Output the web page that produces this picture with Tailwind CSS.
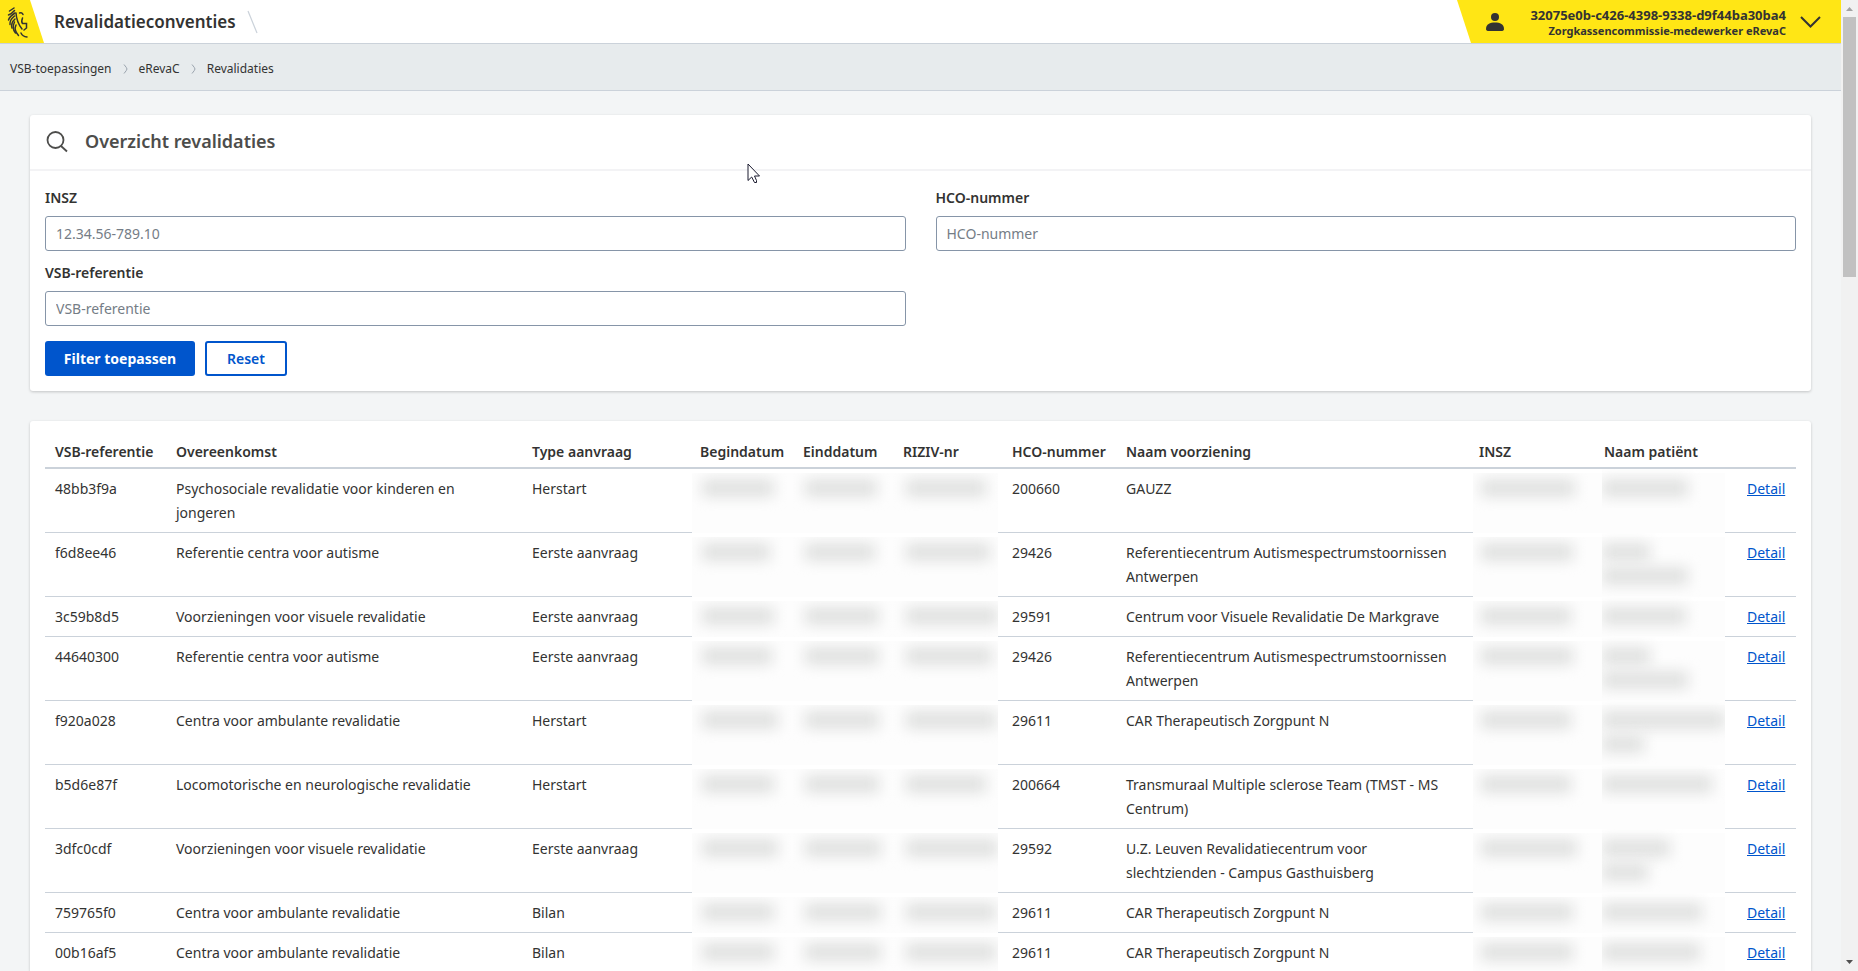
<!DOCTYPE html>
<html lang="nl">
<head>
  <meta charset="UTF-8" />
  <meta name="viewport" content="width=device-width, initial-scale=1.0"/>
  <title>Revalidatieconventies | Overzicht revalidaties</title>
  <script src="https://cdn.jsdelivr.net/npm/@tailwindcss/browser@4"></script>
</head>
<body class="flex h-screen overflow-hidden bg-[#f3f5f6] text-[#333332] text-sm font-['Noto_Sans','Open_Sans',sans-serif]">

<div class="flex-1 min-w-0 overflow-hidden">

  <!-- TOP BAR -->
  <header class="flex h-11 items-stretch justify-between bg-white border-b border-[#cbd2da]">
    <div class="flex items-center">
      <a href="#" aria-label="Vlaanderen" class="block h-full">
        <svg class="h-full w-11" viewBox="0 0 44 43">
          <path d="M0 0H30L44 43H0Z" fill="#ffe615"/>
          <g fill="none" stroke="#333332" stroke-width="1.500" stroke-linecap="round">
            <path d="M9.500 11L14 8"/>
            <path d="M8.500 15Q12 13.500 14.500 10.500"/>
            <path d="M8.500 20Q9.500 16.500 15 13"/>
            <path d="M10 24.500Q9.500 20 14.500 16"/>
            <path d="M12 28Q10.500 23 15 19"/>
            <path d="M15.500 33Q11.500 28 14.500 22"/>
            <path d="M18.500 35.500Q13.500 30 16 25"/>
            <path d="M16 13Q16.500 22 22 29"/>
            <path d="M19.500 13Q22 12 23 14.500"/>
            <path d="M22.500 18Q21 22 22.500 23.500H26.500V28L24 30"/>
            <path d="M21 33Q22.500 36.500 27 37"/>
          </g>
        </svg>
      </a>
      <h1 class="ml-[10px] pt-[2px] text-[17px] font-semibold">Revalidatieconventies</h1>
      <svg class="ml-[11px] h-6 w-3" viewBox="0 0 12 24"><path d="M1 1L10 23" stroke="#cbd2da" stroke-width="1.200"/></svg>
    </div>
    <div class="flex">
      <svg class="h-full w-[15px]" viewBox="0 0 15 43" preserveAspectRatio="none"><path d="M0 0H15V43H14Z" fill="#ffe615"/></svg>
      <button type="button" class="flex items-center bg-[#ffe615] pl-[13px] pr-5 text-right">
        <svg class="mr-[17px] h-5 w-5" viewBox="0 0 20 20" fill="#333332">
          <circle cx="10" cy="5" r="4"/>
          <path d="M1 17C1 12 5 10.500 10 10.500S19 12 19 17Q19 19 16 19H4Q1 19 1 17Z"/>
        </svg>
        <span class="block min-w-[264px] pt-[2px]">
          <span class="block text-[13px] leading-[15px] font-bold">32075e0b-c426-4398-9338-d9f44ba30ba4</span>
          <span class="block text-[11px] leading-[15px] font-bold">Zorgkassencommissie-medewerker eRevaC</span>
        </span>
        <svg class="ml-[14px] h-3 w-[21px]" viewBox="0 0 21 12" fill="none" stroke="#333332" stroke-width="2"><path d="M1 1L10.500 10.500L20 1"/></svg>
      </button>
    </div>
  </header>

  <!-- BREADCRUMB -->
  <nav aria-label="Kruimelpad" class="flex h-[47px] items-center gap-[11px] border-b border-[#cbd2da] bg-[#e7ebed] px-[10px] pt-[3px] text-xs">
    <a href="#">VSB-toepassingen</a>
    <svg class="h-[10px] w-[5px]" viewBox="0 0 5 10" fill="none" stroke="#9aa3ad"><path d="M1 0.500Q4 4 4 5T1 9.500"/></svg>
    <a href="#">eRevaC</a>
    <svg class="h-[10px] w-[5px]" viewBox="0 0 5 10" fill="none" stroke="#9aa3ad"><path d="M1 0.500Q4 4 4 5T1 9.500"/></svg>
    <a href="#">Revalidaties</a>
  </nav>

  <main class="px-[30px] pt-6">

    <!-- FILTER -->
    <section class="rounded-[3px] bg-white shadow-[0_1px_3px_rgba(0,0,0,0.2)]">
      <div class="flex h-14 items-center gap-[17px] border-b-2 border-[#f3f3f5] px-4 pb-px">
        <svg class="h-[22px] w-[22px]" viewBox="0 0 22 22" fill="none" stroke="#4d4d4b" stroke-width="1.800"><circle cx="9.500" cy="9" r="8"/><path d="M15 15L21 20.500"/></svg>
        <h2 class="text-[18px] font-semibold text-[#4d4d4b]">Overzicht revalidaties</h2>
      </div>
      <form class="px-[15px] pt-[15px] pb-[15px]">
        <div class="grid grid-cols-2 gap-x-[30px] gap-y-[10px]">
          <div>
            <label for="insz" class="block leading-6 font-semibold">INSZ</label>
            <input id="insz" type="text" placeholder="12.34.56-789.10" class="mt-[6px] block h-[35px] w-full rounded-[3px] border border-[#8695a8] px-[10px] placeholder:text-[#757d86]" />
          </div>
          <div>
            <label for="hco" class="block leading-6 font-semibold">HCO-nummer</label>
            <input id="hco" type="text" placeholder="HCO-nummer" class="mt-[6px] block h-[35px] w-full rounded-[3px] border border-[#8695a8] px-[10px] placeholder:text-[#757d86]" />
          </div>
          <div>
            <label for="vsb" class="block leading-6 font-semibold">VSB-referentie</label>
            <input id="vsb" type="text" placeholder="VSB-referentie" class="mt-[6px] block h-[35px] w-full rounded-[3px] border border-[#8695a8] px-[10px] placeholder:text-[#757d86]" />
          </div>
        </div>
        <div class="mt-[15px] flex gap-[10px]">
          <button type="submit" class="h-[35px] w-[150px] rounded-[3px] bg-[#0055cc] font-bold text-white">Filter toepassen</button>
          <button type="reset" class="h-[35px] w-[82px] rounded-[3px] border-2 border-[#0055cc] font-semibold text-[#0055cc]">Reset</button>
        </div>
      </form>
    </section>

    <!-- RESULTS -->
    <section class="mt-[30px] rounded-[3px] bg-white px-[15px] pt-[15px] shadow-[0_1px_3px_rgba(0,0,0,0.2)]">
      <table class="w-full table-fixed border-separate border-spacing-0 text-left leading-6">
        <colgroup>
          <col class="w-[121px]"><col class="w-[356px]"><col class="w-[168px]"><col class="w-[103px]"><col class="w-[100px]"><col class="w-[109px]">
          <col class="w-[114px]"><col class="w-[353px]"><col class="w-[125px]"><col class="w-[143px]"><col class="w-[59px]">
        </colgroup>
        <thead>
          <tr class="whitespace-nowrap *:h-[33px] *:border-b-2 *:border-[#cbd2da] *:px-[10px] *:pt-1 *:pb-[3px] *:font-semibold">
            <th>VSB-referentie</th>
            <th>Overeenkomst</th>
            <th>Type aanvraag</th>
            <th>Begindatum</th>
            <th>Einddatum</th>
            <th>RIZIV-nr</th>
            <th>HCO-nummer</th>
            <th>Naam voorziening</th>
            <th>INSZ</th>
            <th>Naam patiënt</th>
            <td></td>
          </tr>
        </thead>
        <tbody id="rows"></tbody>
      </table>
    </section>
  </main>
</div>

<!-- SCROLLBAR -->
<div class="flex w-[17px] shrink-0 flex-col items-center bg-[#f1f1f1]">
  <svg class="h-[17px] w-[17px]" viewBox="0 0 17 17"><path d="M5 11H12L8.500 7Z" fill="#a3a3a3"/></svg>
  <div class="h-[260px] w-[13px] bg-[#c1c1c1]"></div>
  <svg class="mt-auto h-[17px] w-[17px]" viewBox="0 0 17 17"><path d="M5 6H12L8.500 10Z" fill="#505050"/></svg>
</div>

<!-- MOUSE POINTER -->
<svg class="pointer-events-none absolute top-[163px] left-[747px] h-[21px] w-[14px]" viewBox="0 0 14 21"><path d="M1 1V17.500L4.700 14L7.500 19.500H9.500V17.500L7.500 13H12.500Z" fill="#fff" stroke="#1a1a2e"/></svg>

<script>
  // private cells hold the widths of their masked lines
  const rows = [
    ['48bb3f9a', 'Psychosociale revalidatie voor kinderen en jongeren', 'Herstart', '200660', 'GAUZZ', [72, 72, 80, 94], [86]],
    ['f6d8ee46', 'Referentie centra voor autisme', 'Eerste aanvraag', '29426', 'Referentiecentrum Autismespectrumstoornissen Antwerpen', [68, 70, 84, 92], [48, 86]],
    ['3c59b8d5', 'Voorzieningen voor visuele revalidatie', 'Eerste aanvraag', '29591', 'Centrum voor Visuele Revalidatie De Markgrave', [72, 74, 92, 90], [84]],
    ['44640300', 'Referentie centra voor autisme', 'Eerste aanvraag', '29426', 'Referentiecentrum Autismespectrumstoornissen Antwerpen', [70, 74, 86, 92], [48, 86]],
    ['f920a028', 'Centra voor ambulante revalidatie', 'Herstart', '29611', 'CAR Therapeutisch Zorgpunt N', [76, 74, 90, 90], [124, 42]],
    ['b5d6e87f', 'Locomotorische en neurologische revalidatie', 'Herstart', '200664', 'Transmuraal Multiple sclerose Team (TMST - MS Centrum)', [72, 74, 80, 90], [110]],
    ['3dfc0cdf', 'Voorzieningen voor visuele revalidatie', 'Eerste aanvraag', '29592', 'U.Z. Leuven Revalidatiecentrum voor slechtzienden - Campus Gasthuisberg', [76, 76, 92, 96], [68, 46]],
    ['759765f0', 'Centra voor ambulante revalidatie', 'Bilan', '29611', 'CAR Therapeutisch Zorgpunt N', [72, 76, 90, 92], [100]],
    ['00b16af5', 'Centra voor ambulante revalidatie', 'Bilan', '29611', 'CAR Therapeutisch Zorgpunt N', [72, 76, 90, 92], [98]],
  ];

  const cell = (text) => `<td class="border-b border-[#cbd2da] px-[10px] pt-2 pb-[7px]">${text}</td>`;

  const lines = (widths) => widths.map((w) =>
    `<div class="flex h-6 items-center"><div class="h-[18px] bg-[#e0e1e0] blur-[7px]" style="width:${w}px"></div></div>`).join('');

  document.getElementById('rows').innerHTML = rows.map(([ref, deal, type, hco, name, masks, patient]) => `
    <tr class="align-top">
      ${cell(ref)}${cell(deal)}${cell(type)}
      <td class="relative border-b border-[#cbd2da]"><div class="absolute top-1 right-0 -bottom-px left-[2px] overflow-hidden bg-[#fdfdfd] pt-[3px] pl-[10px]">${lines([masks[0]])}</div></td>
      <td class="relative border-b border-[#cbd2da]"><div class="absolute top-1 right-0 -bottom-px left-0 overflow-hidden bg-[#fdfdfd] pt-[3px] pl-[12px]">${lines([masks[1]])}</div></td>
      <td class="relative border-b border-[#cbd2da]"><div class="absolute top-1 right-[4px] -bottom-px left-0 overflow-hidden bg-[#fdfdfd] pt-[3px] pl-[13px]">${lines([masks[2]])}</div></td>
      ${cell(hco)}${cell(name)}
      <td class="relative border-b border-[#cbd2da]"><div class="absolute top-1 right-0 -bottom-px left-[4px] overflow-hidden bg-[#fdfdfd] pt-[3px] pl-[8px]">${lines([masks[3]])}</div></td>
      <td class="relative border-b border-[#cbd2da]">
        <div class="absolute top-1 right-[12px] -bottom-px left-0 bg-[#fdfdfd]"></div>
        <div class="relative mr-3 ml-2 overflow-hidden pt-[7px] pb-2">${lines(patient)}</div>
      </td>
      <td class="border-b border-[#cbd2da] px-[10px] pt-2 pb-[7px]"><a href="#" class="text-[#0055cc] underline">Detail</a></td>
    </tr>`).join('');
</script>

</body>
</html>
